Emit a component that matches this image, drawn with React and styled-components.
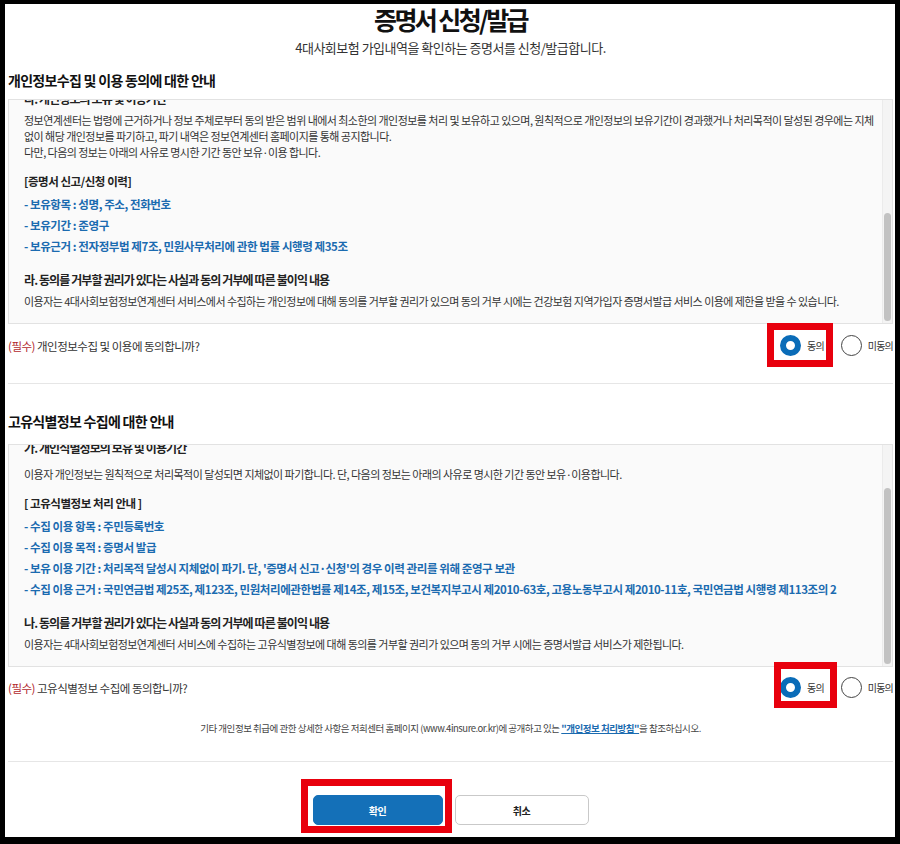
import React from 'react';
import styled, { createGlobalStyle } from 'styled-components';

const GlobalStyle = createGlobalStyle`
  html, body { margin: 0; padding: 0; background: #000; }
  body { font-family: "Noto Sans CJK KR", "Noto Sans", sans-serif; color: #333; }
  * { box-sizing: border-box; }
`;

const Frame = styled.div`
  width: 900px;
  height: 844px;
  border-style: solid;
  border-color: #000;
  border-width: 4px 5px 7px 5px;
  background: #fff;
  overflow: hidden;
`;

const Page = styled.main`
  width: 890px;
  padding: 0 2px 0 3px;
  display: flex;
  flex-direction: column;
`;

const Title = styled.h1`
  margin: 0;
  text-align: center;
  font-size: 25px;
  line-height: 30px;
  font-weight: 700;
  letter-spacing: -2.6px;
  color: #111;
`;

const Subtitle = styled.p`
  margin: 5px 0 0;
  text-align: center;
  font-size: 13px;
  line-height: 18px;
  letter-spacing: -0.5px;
  color: #333;
`;

const SectionTitle = styled.h2`
  margin: ${p => p.$mt}px 0 0;
  font-size: 14px;
  line-height: 20px;
  font-weight: 700;
  letter-spacing: -0.7px;
  color: #111;
`;

const Box = styled.div`
  margin-top: ${p => p.$mt}px;
  height: ${p => p.$h}px;
  border: 1px solid #e2e2e2;
  background: #fafafa;
  display: flex;
`;

const Viewport = styled.div`
  flex: 1;
  min-width: 0;
  overflow: hidden;
  display: flex;
  flex-direction: column;
  justify-content: flex-end;
`;

const Inner = styled.div`
  flex: none;
  padding: 14px 8px 14px 15px;
`;

const Track = styled.div`
  width: 10px;
  flex: none;
  position: relative;
  background: #f4f4f4;
  border-left: 1px solid #ebebeb;
`;

const Thumb = styled.div`
  position: absolute;
  right: 1px;
  width: 7px;
  top: ${p => p.$top}px;
  height: ${p => p.$height}px;
  border-radius: 4px;
  background: #c2c2c2;
`;

const Heading = styled.h3`
  margin: 14.5px 0 0;
  font-size: 12px;
  line-height: 18px;
  font-weight: 700;
  letter-spacing: -0.9px;
  color: #222;
  white-space: nowrap;
  &:first-child { margin-top: 0; }
`;

const Para = styled.div`
  margin-top: ${p => p.$mt ?? 4}px;
  font-size: 11px;
  line-height: 16px;
  letter-spacing: -0.54px;
  color: #333;
  &:first-child { margin-top: 0; }
`;

const Line = styled.span`
  display: block;
  white-space: nowrap;
`;

const Bracket = styled.div`
  margin-top: 13.5px;
  font-size: 11.5px;
  line-height: 17px;
  font-weight: 700;
  letter-spacing: -0.45px;
  color: #222;
  white-space: nowrap;
`;

const List = styled.ul`
  margin: 3.5px 0 0;
  padding: 0;
  list-style: none;
`;

const Item = styled.li`
  font-size: 11.5px;
  line-height: 21px;
  font-weight: 700;
  letter-spacing: -0.42px;
  color: #1b6bb0;
  white-space: nowrap;
`;

const ConsentRow = styled.div`
  display: flex;
  align-items: center;
  justify-content: space-between;
  padding: ${p => p.$pt}px 0 ${p => p.$pb}px;
  border-bottom: ${p => (p.$divider ? '1px solid #e6e6e6' : 'none')};
`;

const Question = styled.p`
  margin: 0;
  font-size: 11.5px;
  line-height: 16px;
  letter-spacing: -0.5px;
  color: #333;
`;

const Required = styled.span`
  color: #b2292e;
`;

const RadioGroup = styled.div`
  display: flex;
  align-items: center;
  gap: 17px;
  margin-right: 0;
  flex: none;
`;

const Option = styled.label`
  position: relative;
  display: inline-flex;
  align-items: center;
  gap: 6px;
  font-size: 10px;
  letter-spacing: -0.8px;
  color: #333;
  white-space: nowrap;
`;

const RadioCircle = styled.span`
  width: 21px;
  height: 21px;
  flex: none;
  border-radius: 50%;
  background: #fff;
  border: ${p => (p.$checked ? '6px solid #0a6cb8' : '1px solid #444')};
`;

const Annot = styled.span`
  position: absolute;
  pointer-events: none;
  top: ${p => p.$t}px;
  right: ${p => p.$r}px;
  bottom: ${p => p.$b}px;
  left: ${p => p.$l}px;
  border: 7px solid #e8000d;
`;

const Note = styled.p`
  margin: 23px 0 0;
  padding-bottom: 26px;
  border-bottom: 1px solid #e6e6e6;
  text-align: center;
  font-size: 9.5px;
  line-height: 14px;
  letter-spacing: -0.47px;
  color: #444;
  white-space: nowrap;
`;

const PolicyLink = styled.a`
  color: #1b6bb0;
  font-weight: 700;
  text-decoration: underline;
`;

const ButtonRow = styled.div`
  margin-top: 33px;
  display: flex;
  justify-content: center;
  gap: 12px;
`;

const ButtonWrap = styled.span`
  position: relative;
  display: inline-flex;
`;

const Button = styled.button`
  width: ${p => p.$w}px;
  height: 30px;
  border-radius: 5px;
  font-family: "Noto Sans CJK KR", "Noto Sans", sans-serif;
  font-size: 10px;
  font-weight: 700;
  letter-spacing: -0.5px;
  cursor: pointer;
  background: ${p => (p.$primary ? '#1470b8' : '#fff')};
  color: ${p => (p.$primary ? '#fff' : '#222')};
  border: 1px solid ${p => (p.$primary ? '#1470b8' : '#c9c9c9')};
`;

function Radios({ annot }) {
  return (
    <RadioGroup>
      <Option>
        <RadioCircle $checked />
        동의
        <Annot {...annot} />
      </Option>
      <Option>
        <RadioCircle />
        미동의
      </Option>
    </RadioGroup>
  );
}

export default function App() {
  return (
    <>
      <GlobalStyle />
      <Frame>
        <Page>
          <Title>증명서 신청/발급</Title>
          <Subtitle>4대사회보험 가입내역을 확인하는 증명서를 신청/발급합니다.</Subtitle>

          <SectionTitle $mt={13}>개인정보수집 및 이용 동의에 대한 안내</SectionTitle>
          <Box $mt={9} $h={225}>
            <Viewport>
              <Inner>
                <Heading>가. 수집하는 개인정보 항목</Heading>
                <Para>
                  <Line>정보연계센터는 증명서 신청/발급 서비스 제공을 위해 아래와 같은 개인정보를 수집하고 있습니다.</Line>
                </Para>
                <Bracket>[증명서 신청]</Bracket>
                <List>
                  <Item>- 수집항목 : 성명, 주민등록번호, 주소, 전화번호</Item>
                  <Item>- 수집방법 : 홈페이지 증명서 신청 화면</Item>
                </List>
                <Heading>나. 개인정보의 수집 및 이용 목적</Heading>
                <Para>
                  <Line>수집한 개인정보는 4대사회보험 가입내역 확인 증명서의 신청 접수 및 발급, 본인 확인, 민원 처리를 위한 목적으로만 이용합니다.</Line>
                  <Line>수집한 개인정보는 위 목적 이외의 용도로는 이용되지 않으며, 이용 목적이 변경되는 경우에는 사전 동의를 구합니다.</Line>
                  <Line>개인정보는 관계 법령에 따라 안전하게 관리됩니다.</Line>
                </Para>
                <Heading>다. 개인정보의 보유 및 이용기간</Heading>
                <Para>
                  <Line>정보연계센터는 법령에 근거하거나 정보 주체로부터 동의 받은 범위 내에서 최소한의 개인정보를 처리 및 보유하고 있으며, 원칙적으로 개인정보의 보유기간이 경과했거나 처리목적이 달성된 경우에는 지체</Line>
                  <Line>없이 해당 개인정보를 파기하고, 파기 내역은 정보연계센터 홈페이지를 통해 공지합니다.</Line>
                  <Line>다만, 다음의 정보는 아래의 사유로 명시한 기간 동안 보유·이용 합니다.</Line>
                </Para>
                <Bracket>[증명서 신고/신청 이력]</Bracket>
                <List>
                  <Item>- 보유항목 : 성명, 주소, 전화번호</Item>
                  <Item>- 보유기간 : 준영구</Item>
                  <Item>- 보유근거 : 전자정부법 제7조, 민원사무처리에 관한 법률 시행령 제35조</Item>
                </List>
                <Heading>라. 동의를 거부할 권리가 있다는 사실과 동의 거부에 따른 불이익 내용</Heading>
                <Para>
                  <Line>이용자는 4대사회보험정보연계센터 서비스에서 수집하는 개인정보에 대해 동의를 거부할 권리가 있으며 동의 거부 시에는 건강보험 지역가입자 증명서발급 서비스 이용에 제한을 받을 수 있습니다.</Line>
                </Para>
              </Inner>
            </Viewport>
            <Track>
              <Thumb $top={113} $height={108} />
            </Track>
          </Box>
          <ConsentRow $pt={11} $pb={27} $divider>
            <Question>
              <Required>(필수)</Required> 개인정보수집 및 이용에 동의합니까?
            </Question>
            <Radios annot={{ $t: -12, $r: -9, $b: -11, $l: -12.5 }} />
          </ConsentRow>

          <SectionTitle $mt={27}>고유식별정보 수집에 대한 안내</SectionTitle>
          <Box $mt={13} $h={223}>
            <Viewport>
              <Inner>
                <Para>
                  <Line>정보연계센터는 「개인정보 보호법」 제24조에 따라 증명서 발급을 위하여 아래와 같이 고유식별정보를 처리합니다.</Line>
                  <Line>고유식별정보는 관계 법령에서 정한 범위 내에서만 처리합니다.</Line>
                </Para>
                <Heading>가. 개인식별정보의 보유 및 이용기간</Heading>
                <Para $mt={9}>
                  <Line>이용자 개인정보는 원칙적으로 처리목적이 달성되면 지체없이 파기합니다. 단, 다음의 정보는 아래의 사유로 명시한 기간 동안 보유·이용합니다.</Line>
                </Para>
                <Bracket>[ 고유식별정보 처리 안내 ]</Bracket>
                <List>
                  <Item>- 수집 이용 항목 : 주민등록번호</Item>
                  <Item>- 수집 이용 목적 : 증명서 발급</Item>
                  <Item>- 보유 이용 기간 : 처리목적 달성시 지체없이 파기. 단, '증명서 신고·신청'의 경우 이력 관리를 위해 준영구 보관</Item>
                  <Item>- 수집 이용 근거 : 국민연금법 제25조, 제123조, 민원처리에관한법률 제14조, 제15조, 보건복지부고시 제2010-63호, 고용노동부고시 제2010-11호, 국민연금법 시행령 제113조의 2</Item>
                </List>
                <Heading>나. 동의를 거부할 권리가 있다는 사실과 동의 거부에 따른 불이익 내용</Heading>
                <Para>
                  <Line>이용자는 4대사회보험정보연계센터 서비스에 수집하는 고유식별정보에 대해 동의를 거부할 권리가 있으며 동의 거부 시에는 증명서발급 서비스가 제한됩니다.</Line>
                </Para>
              </Inner>
            </Viewport>
            <Track>
              <Thumb $top={43} $height={176} />
            </Track>
          </Box>
          <ConsentRow $pt={10} $pb={0}>
            <Question>
              <Required>(필수)</Required> 고유식별정보 수집에 동의합니까?
            </Question>
            <Radios annot={{ $t: -15.5, $r: -13, $b: -9.5, $l: -5.5 }} />
          </ConsentRow>

          <Note>
            기타 개인정보 취급에 관한 상세한 사항은 저희센터 홈페이지 (www.4insure.or.kr)에 공개하고 있는{' '}
            <PolicyLink href="#">"개인정보 처리방침"</PolicyLink>을 참조하십시오.
          </Note>

          <ButtonRow>
            <ButtonWrap>
              <Button $primary $w={130}>확인</Button>
              <Annot $t={-16} $r={-9} $b={-8} $l={-12} />
            </ButtonWrap>
            <ButtonWrap>
              <Button $w={134}>취소</Button>
            </ButtonWrap>
          </ButtonRow>
        </Page>
      </Frame>
    </>
  );
}
